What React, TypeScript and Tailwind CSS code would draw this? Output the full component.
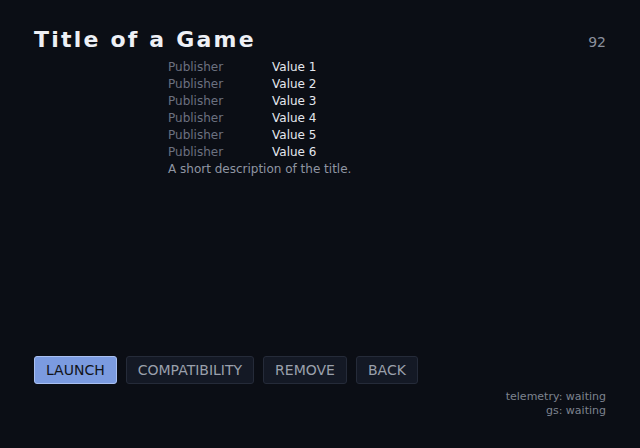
const DETAILS = ["Value 1", "Value 2", "Value 3", "Value 4", "Value 5", "Value 6"];

const ACTIONS = ["LAUNCH", "COMPATIBILITY", "REMOVE", "BACK"];

export default function App() {
  return (
    <div
      className="flex flex-col h-[448px] w-full bg-[#0b0e15] px-[34px] pt-[26px] pb-[30px]"
      style={{ fontFamily: '"DejaVu Sans", sans-serif' }}
    >
      <div className="flex items-baseline justify-between">
        <h1 className="text-[22px] leading-[28px] font-bold tracking-[2.2px] text-[#eef0f5]">
          Title of a Game
        </h1>
        <span className="text-[14px] leading-[18px] text-[#8a909c]">92</span>
      </div>

      <div className="ml-[134px] mt-[5px] text-[12px] leading-[17px]">
        {DETAILS.map((v) => (
          <div key={v} className="flex">
            <span className="w-[104px] text-[#6b7180]">Publisher</span>
            <span className="text-[#e4e7ee]">{v}</span>
          </div>
        ))}
        <p className="text-[#8f95a2]">A short description of the title.</p>
      </div>

      <div className="flex-1" />

      <div className="flex gap-[9px]">
        {ACTIONS.map((a, i) => (
          <button
            key={a}
            type="button"
            className={
              i === 0
                ? "h-[28px] px-[11px] pt-px rounded-[3px] border border-[#a9c0f2] bg-[#7b9be0] text-[14px] text-[#111318]"
                : "h-[28px] px-[11px] pt-px rounded-[3px] border border-[#252b39] bg-[#141925] text-[14px] text-[#9aa0ac]"
            }
          >
            {a}
          </button>
        ))}
      </div>

      <div className="mt-[6px] text-right text-[11px] leading-[14px] text-[#7d838f]">
        <div>telemetry: waiting</div>
        <div>gs: waiting</div>
      </div>
    </div>
  );
}
